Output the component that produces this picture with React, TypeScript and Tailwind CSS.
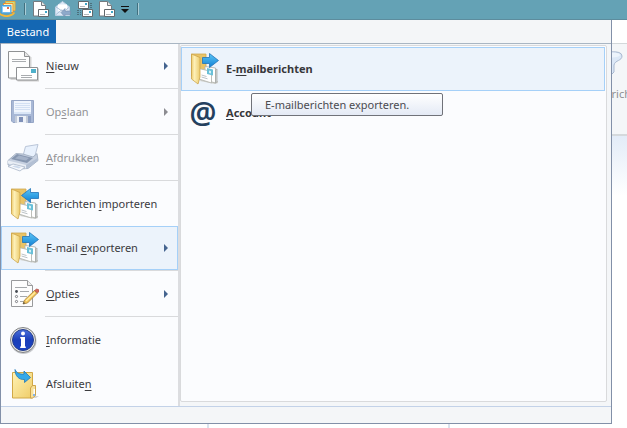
import type { ReactNode } from "react";

function NewIcon() {
  return (
    <svg width="32" height="32" viewBox="0 0 32 32" aria-hidden="true">
      <path d="M2.5 1.5h16l5 5v22.5h-21z" fill="#d6d6d6" transform="translate(1 1)" />
      <path d="M1.5 1.5h16l5 5v21.500h-21z" fill="#fdfdfd" stroke="#8f9193" />
      <path d="M17.500 1.500v5h5" fill="#e6e6e6" stroke="#8f9193" />
      <path d="M5 9.500h14M5 11.500h14" stroke="#a9acaf" />
      <path d="M10.500 18.500h22v13h-22z" fill="#cfcfcf" />
      <path d="M9.500 17.500h21v12.500h-21z" fill="#fff" stroke="#8f9193" />
      <path d="M24 19h5v4h-5z" fill="#4fb0ca" />
      <path d="M14 25.500h11M14 27.500h11" stroke="#a9acaf" />
    </svg>
  );
}

function SaveIcon() {
  return (
    <svg width="32" height="32" viewBox="0 0 32 32" aria-hidden="true">
      <path d="M4.500 4.500h22v22h-20.500l-1.500-1.500z" fill="#a8b8d6" stroke="#96a6c6" />
      <path d="M7 5h17v13h-17z" fill="#f0f5fd" />
      <path d="M8 7.500h15M8 9.500h15M8 11.500h15M8 13.500h15" stroke="#d3e0f3" />
      <path d="M7 16h17v2h-17z" fill="#d9e5f6" />
      <path d="M8 20h16v7h-16z" fill="#c3cbd9" />
      <path d="M10 20h9v7h-9z" fill="#edf1f7" />
      <path d="M12 21h4v5h-4z" fill="#7f90b8" />
      <path d="M21 20h3v7h-3z" fill="#8c9ec2" />
    </svg>
  );
}

function PrintIcon() {
  return (
    <svg width="32" height="32" viewBox="0 0 32 32" aria-hidden="true">
      <path d="M16 14 18.500 4.500l12.500-2-3.500 13z" fill="#e8f1fd" stroke="#b9c5d8" />
      <path d="M1 18.500 9 11.500l7 .5 10 3 4-3.500 1 7-10 8-8 .5-12-4z" fill="#c7d1e1" stroke="#9ca9bd" strokeWidth=".8" />
      <path d="m4 17 6-5 16 4-6 5z" fill="#8797b0" />
      <path d="m8 16.500 4-3 10 2.500-3 2.500z" fill="#a4b2c8" />
      <path d="m1 18.500 18 4.500v3.500l-18-5z" fill="#e9eef5" />
      <path d="m19 23 11.500-7v3l-11 8z" fill="#b3c0d4" />
      <path d="m1 24.500 5-2.500 12 3-5 4z" fill="#f7f9fd" stroke="#a9b6c9" strokeWidth=".8" />
      <path d="m5 24.500 3-1 6 1.500-2 1.500z" fill="#cddaec" />
    </svg>
  );
}

function FolderMailIcon({ direction }: { direction: "in" | "out" }) {
  return (
    <svg width="32" height="32" viewBox="0 0 32 32" aria-hidden="true">
      <defs>
        <linearGradient id={`folder-${direction}`}>
          <stop stopColor="#efcd70" />
          <stop offset=".35" stopColor="#fdf0b8" />
          <stop offset="1" stopColor="#eccb6c" />
        </linearGradient>
        <linearGradient id={`arrow-${direction}`} x2="0" y2="1">
          <stop stopColor="#5cc6f6" />
          <stop offset="1" stopColor="#1080d4" />
        </linearGradient>
      </defs>
      <path d="M4.500 1h14.500v22H4.500z" fill="#e9c467" stroke="#cfa850" strokeWidth=".8" />
      <path d="m13 28 15 3 3-1v-2l-17-2z" fill="#d0d0cc" />
      <path d="m18 13.500 10.500 1.500v15L18 27z" fill="#fff" stroke="#b2b5b0" strokeWidth=".9" />
      <path d="m28.500 17 1.500-1v13l-1.500 1z" fill="#d5d8d8" stroke="#a2a5a2" strokeWidth=".7" />
      <path d="m12 15.500 12.500 3V30L12 26z" fill="#fff" stroke="#b5b8b2" strokeWidth=".9" />
      <path d="m20 15 6 1.500v6l-6-1.500z" fill="#69c0d8" />
      <path d="m22 17.500 2 .5v2.500l-2-.5z" fill="#d5f0f6" />
      <path d="m14.500 22 5 1.500m-5 .5 6 1.800" fill="none" stroke="#aab2b8" strokeWidth=".8" />
      <path d="m4.500 1 8.500 3.500V24l-2 7-6.500-5z" fill={`url(#folder-${direction})`} stroke="#cda54a" strokeWidth=".8" />
      {direction === "in" ? (
        <path d="m14.500 7.500 9-7v4h8v6h-8v4z" fill="url(#arrow-in)" stroke="#2274b8" strokeWidth=".8" />
      ) : (
        <path d="m31.500 7.500-9-7v4h-7v6h7v4z" fill="url(#arrow-out)" stroke="#2274b8" strokeWidth=".8" />
      )}
    </svg>
  );
}

function OptionsIcon() {
  return (
    <svg width="32" height="32" viewBox="0 0 32 32" aria-hidden="true">
      <path d="M4.500 2.500h16l5 5v21h-21z" fill="#fdfdfd" stroke="#999a9c" />
      <path d="M20.500 2.500v5h5" fill="#eee" stroke="#999a9c" />
      <path d="M8 9.500h12M13 13.500h9M13 18.500h7M13 23.500h5" stroke="#a5a8ab" />
      <circle cx="9.500" cy="13.500" r="1.400" fill="#454a51" />
      <circle cx="9.500" cy="18.500" r="1.100" fill="#fff" stroke="#77797e" />
      <circle cx="9.500" cy="23.500" r="1.100" fill="#fff" stroke="#77797e" />
      <path d="m16 26 1.500-4 10-9.500 3 2.500-10 10z" fill="#f5c458" stroke="#a3813e" strokeWidth=".8" />
      <path d="m19 23 9-8.500" stroke="#fff0a8" strokeWidth="1.200" />
      <path d="m27.500 12.500 2-1.500q3 0 2.500 2.500l-1.500 1.500z" fill="#d66558" stroke="#a6544c" strokeWidth=".6" />
      <path d="m16 26 .8-2 1.400 1.300z" fill="#444" />
    </svg>
  );
}

function InfoIcon() {
  return (
    <svg width="32" height="32" viewBox="0 0 32 32" aria-hidden="true">
      <defs>
        <linearGradient id="info-blue" x2="0" y2="1">
          <stop stopColor="#4a70dc" />
          <stop offset=".5" stopColor="#1b3fb9" />
          <stop offset="1" stopColor="#1b44c4" />
        </linearGradient>
      </defs>
      <circle cx="16.500" cy="17" r="13" fill="#c9cbcf" />
      <circle cx="16" cy="16" r="12.500" fill="#e6e6e4" stroke="#828486" />
      <circle cx="16" cy="16" r="10.500" fill="url(#info-blue)" stroke="#253e8c" />
      <circle cx="16" cy="9.500" r="2" fill="#fff" />
      <path d="M14 13h4v9.500h.8v1.500h-5.600v-1.500h.8v-8h-.8v-1.500z" fill="#fff" />
    </svg>
  );
}

function ExitIcon() {
  return (
    <svg width="32" height="32" viewBox="0 0 32 32" aria-hidden="true">
      <defs>
        <linearGradient id="exit-folder" x2="1" y2="1">
          <stop stopColor="#fff3b4" />
          <stop offset="1" stopColor="#efcc68" />
        </linearGradient>
      </defs>
      <path d="M25 28h7l-3 2H6z" fill="#d5d5d3" />
      <path d="M5.500 4.500h20v25.500h-20z" fill="url(#exit-folder)" stroke="#d1a846" />
      <path d="m23.500 20 2-2.500h3v10l-3 2.500h-2z" fill="#f8e19a" stroke="#cfa54b" />
      <path d="M26.500 21h1.500v7h-1.500z" fill="#fff" />
      <path d="M26 26h2v2h-2z" fill="#83b4ed" />
      <path d="M8 1.500c2 4 5 5 9 4.500V3l6.500 6.500-6 5v-3C12 12 8 8 8 1.500z" fill="#35a9e8" stroke="#2579b5" strokeWidth=".8" />
    </svg>
  );
}

function AccountIcon() {
  return (
    <span aria-hidden="true" className="text-center font-['Noto_Sans',sans-serif] text-[30px] leading-7 font-semibold text-[#24405f]">
      @
    </span>
  );
}

function DocMailIcon() {
  return (
    <svg width="16" height="16" viewBox="0 0 16 16" aria-hidden="true">
      <path d="M.5.500h8l4 4v10.500h-12z" fill="#fff" stroke="#747b80" />
      <path d="M8.500.500v4h4" fill="#e9e9e9" stroke="#747b80" />
      <path d="M5.500 8.500h10v7h-10z" fill="#fff" stroke="#62696d" />
      <path d="M12 10h2v2h-2z" fill="#3fa6c8" />
      <path d="M7 13.500h5" stroke="#b5babd" />
    </svg>
  );
}

function ReplyMailIcon() {
  return (
    <svg width="16" height="16" viewBox="0 0 16 16" aria-hidden="true">
      <path d="m.5 6 7-5.500 7 5.500v8.500H.500z" fill="#dce9f7" stroke="#c1d1e3" />
      <path d="M3 3.500h9v6l-4.500 2-4.500-2z" fill="#fff" />
      <path d="m.5 14 6-5 3 1 5-4M1 6l6 4" fill="none" stroke="#adc1d8" />
      <path d="m6 11.500 4-4v2.500h5.500v3.500H10V16z" fill="#8ea9ca" stroke="#748dae" strokeWidth=".6" />
    </svg>
  );
}

function TwoMailsIcon() {
  return (
    <svg width="16" height="16" viewBox="0 0 16 16" aria-hidden="true">
      <path d="M1.500.500h10v7h-10zM5.500 8.500h10v7h-10z" fill="#fff" stroke="#62696d" />
      <path d="M8 2h2v2H8zM12 10h2v2h-2z" fill="#3fa6c8" />
      <path d="M3 5.500h5M7 13.500h5" stroke="#b5babd" />
      <path d="M0 9.500h4M0 11.500h4M0 13.500h4M13 2.500h3M13 4.500h3M13 6.500h3" stroke="#4c6f7c" strokeDasharray="2 1" />
    </svg>
  );
}

function AppIcon() {
  return (
    <svg width="16" height="16" viewBox="0 0 16 16" aria-hidden="true">
      <path d="M5.500.500h9.500v9h-9.500z" fill="#c8e388" stroke="#e9a83a" />
      <path d="M3.500 2.500h9.500v9h-9.500z" fill="#fff0b0" stroke="#f08f2c" />
      <path d="M1.500 4.500h9.500v7.500h-9.500z" fill="#8fd0f8" stroke="#4aa2e0" />
      <path d="M3 6h7v5H3z" fill="#fff" />
      <path d="M7 6h2v2H7z" fill="#df6c4d" />
      <path d="M0 12c4 3 10 3 14-1l1 1c-3 5-11 5-15 2z" fill="#f7b733" />
    </svg>
  );
}

type Item = {
  label: ReactNode;
  icon: ReactNode;
  submenu?: boolean;
  disabled?: boolean;
  active?: boolean;
  divider?: boolean;
};

const items: Item[] = [
  { label: <><u>N</u>ieuw</>, icon: <NewIcon />, submenu: true, divider: true },
  { label: <>Op<u>s</u>laan</>, icon: <SaveIcon />, submenu: true, disabled: true, divider: true },
  { label: <><u>A</u>fdrukken</>, icon: <PrintIcon />, disabled: true, divider: true },
  { label: <>Berichten <u>i</u>mporteren</>, icon: <FolderMailIcon direction="in" /> },
  { label: <>E-mail <u>e</u>xporteren</>, icon: <FolderMailIcon direction="out" />, submenu: true, active: true, divider: true },
  { label: <><u>O</u>pties</>, icon: <OptionsIcon />, submenu: true, divider: true },
  { label: <><u>I</u>nformatie</>, icon: <InfoIcon /> },
  { label: <>Afsluite<u>n</u></>, icon: <ExitIcon /> },
];

function MenuItem({ item }: { item: Item }) {
  return (
    <li>
      <button
        type="button"
        disabled={item.disabled}
        className={`flex h-11 w-full items-center gap-[7px] border px-[5px] text-left ${
          item.active ? "border-[#a5d0f8] bg-[#ecf3fb]" : "border-transparent"
        } ${item.disabled ? "text-[#929295]" : "text-[#3b3b3e]"}`}
      >
        <span className="flex size-8 shrink-0 items-center justify-center">{item.icon}</span>
        <span className="flex-1 whitespace-nowrap">{item.label}</span>
        {item.submenu && (
          <svg width="10" height="8" viewBox="0 0 10 8" aria-hidden="true">
            <path d="M2 0v8l4-4z" fill={item.disabled ? "#8c8c91" : "#45648f"} />
          </svg>
        )}
      </button>
      {item.divider && <div className="ml-11 h-[2px] border-t border-[#d9dadc]" />}
    </li>
  );
}

function BarDivider() {
  return (
    <span className="flex w-[5px] justify-center">
      <span className="h-3 w-[2px] border-r border-[#a9cdd7] bg-[#41707f]" />
    </span>
  );
}

function TitleBar() {
  return (
    <header className="flex h-5 items-center gap-[6px] border-b border-[#5d8c9d] bg-[#64a2b5] pb-px">
      <AppIcon />
      <BarDivider />
      <button type="button" aria-label="Nieuw bericht" className="w-4"><DocMailIcon /></button>
      <button type="button" aria-label="Beantwoorden" className="w-4"><ReplyMailIcon /></button>
      <button type="button" aria-label="Verzenden en ontvangen" className="w-4"><TwoMailsIcon /></button>
      <button type="button" aria-label="Nieuw document" className="w-4"><DocMailIcon /></button>
      <button type="button" aria-label="Werkbalk aanpassen">
        <svg width="8" height="8" viewBox="0 0 8 8" aria-hidden="true">
          <path d="M0 1.500h8" stroke="#111" />
          <path d="M0 4h8L4 8z" fill="#111" />
        </svg>
      </button>
      <BarDivider />
    </header>
  );
}

function Backdrop() {
  return (
    <div className="col-start-1 row-start-1 flex min-w-0 flex-col overflow-hidden bg-white">
      <div className="h-6 border-b border-[#d3d8da]" />
      <div className="flex h-[92px] flex-col items-end gap-2 border-b-2 border-[#d5d9dc] bg-[#f4f6f8] pt-[6px] text-[#8f8f93]">
        <svg width="22" height="28" viewBox="0 0 22 28" className="mr-1 shrink-0" aria-hidden="true">
          <path d="M1 6c0-4 20-7 20 0 0 5-7 4-8 9v7l-4 4V15C8 11 1 10 1 6z" fill="#dce8f7" stroke="#a9b9d0" />
          <ellipse cx="11" cy="5" rx="8" ry="2.500" fill="#edf4fc" />
        </svg>
        <span className="-mr-1">Berich</span>
      </div>
      <div className="flex flex-1 bg-linear-to-b from-[#e3ecf8] to-white to-[60px]">
        <div className="w-1/3 border-r-2 border-[#dbe3ee]" />
        <div className="w-[241px] border-r-2 border-[#dbe3ee]" />
      </div>
    </div>
  );
}

function SubMenu() {
  return (
    <div className="min-w-0 flex-1 bg-[#f4f6f8] pt-px pr-1 pb-1">
      <div className="relative h-full rounded-[2px] border border-[#d9dadc] bg-[#fbfcfe] pt-px pr-px font-bold text-[#38383b]">
        <button
          type="button"
          className="flex h-11 w-full items-center gap-[7px] border border-[#a5d0f8] bg-[#ecf3fb] px-[5px] text-left"
        >
          <FolderMailIcon direction="out" />
          <span>E-<u>m</u>ailberichten</span>
        </button>
        <button
          type="button"
          className="flex h-11 w-full items-center gap-[7px] border border-transparent px-[5px] text-left"
        >
          <span className="flex size-8 items-center justify-center"><AccountIcon /></span>
          <span><u>A</u>ccount</span>
        </button>
        <div
          role="tooltip"
          className="absolute top-[47px] left-[70px] flex h-[23px] w-48 items-center rounded-[2px] border border-[#707279] bg-linear-to-b from-white to-[#e4eaf5] px-[13px] font-normal whitespace-nowrap text-[#4b4b50]"
        >
          E-mailberichten exporteren.
        </div>
      </div>
    </div>
  );
}

export default function App() {
  return (
    <div className="flex min-h-screen flex-col bg-white font-['Noto_Sans',sans-serif] text-[11px] leading-4 [&_u]:underline-offset-2">
      <TitleBar />
      <div className="grid flex-1 grid-cols-1">
        <Backdrop />
        <main className="relative col-start-1 row-start-1 mr-[15px] self-start border-r border-b border-l border-[#8290a8] bg-[#f4f6f8]">
          <div className="flex h-6 border-b border-[#a9b6c3]">
            <button type="button" className="-ml-px w-14 bg-[#1467b3] text-white">
              Bestand
            </button>
          </div>
          <div className="flex border-b border-[#c3d2e8]">
            <nav aria-label="Bestand" className="w-[179px] shrink-0 border-r-2 border-[#dcdde0] bg-[#fbfcfe]">
              <ul>
                {items.map((item, index) => (
                  <MenuItem key={index} item={item} />
                ))}
              </ul>
            </nav>
            <SubMenu />
          </div>
          <div className="h-4" />
        </main>
      </div>
    </div>
  );
}
